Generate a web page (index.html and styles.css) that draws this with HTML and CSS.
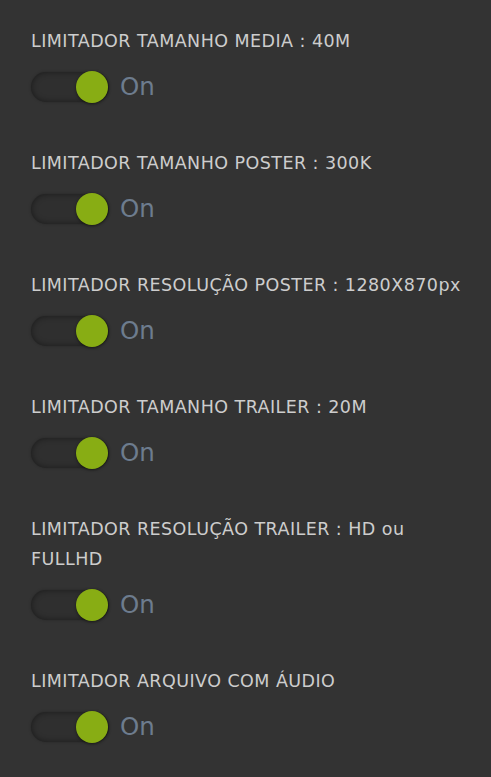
FILE: index.html
```html
<!DOCTYPE html>
<html lang="pt">
<head>
<meta charset="utf-8">
<link rel="stylesheet" href="styles.css">
</head>
<body>
<div class="panel">
  <div class="setting">
    <div class="label">LIMITADOR TAMANHO MEDIA : 40M</div>
    <div class="toggle-row"><span class="switch"><span class="knob"></span></span><span class="state">On</span></div>
  </div>
  <div class="setting">
    <div class="label">LIMITADOR TAMANHO POSTER : 300K</div>
    <div class="toggle-row"><span class="switch"><span class="knob"></span></span><span class="state">On</span></div>
  </div>
  <div class="setting">
    <div class="label">LIMITADOR RESOLUÇÃO POSTER : 1280X870px</div>
    <div class="toggle-row"><span class="switch"><span class="knob"></span></span><span class="state">On</span></div>
  </div>
  <div class="setting">
    <div class="label">LIMITADOR TAMANHO TRAILER : 20M</div>
    <div class="toggle-row"><span class="switch"><span class="knob"></span></span><span class="state">On</span></div>
  </div>
  <div class="setting">
    <div class="label">LIMITADOR RESOLUÇÃO TRAILER : HD ou FULLHD</div>
    <div class="toggle-row"><span class="switch"><span class="knob"></span></span><span class="state">On</span></div>
  </div>
  <div class="setting">
    <div class="label">LIMITADOR ARQUIVO COM ÁUDIO</div>
    <div class="toggle-row"><span class="switch"><span class="knob"></span></span><span class="state">On</span></div>
  </div>
</div>
</body>
</html>
```
FILE: styles.css
```css
html, body {
  margin: 0;
  padding: 0;
  background: #333333;
}
body {
  font-family: "DejaVu Sans", sans-serif;
  min-height: 777px;
}
.panel {
  padding: 26px 22px 0 31px;
  display: flex;
  flex-direction: column;
}
.setting {
  display: flex;
  flex-direction: column;
  margin-bottom: 45px;
}
.label {
  color: #cdcdcd;
  font-size: 17.5px;
  letter-spacing: 0.45px;
  line-height: 30px;
}
.toggle-row {
  margin-top: 15px;
  height: 32px;
  display: flex;
  align-items: center;
  gap: 11px;
}
.switch {
  position: relative;
  width: 78px;
  height: 30px;
  border-radius: 15px;
  background: #2f2f2f;
  box-shadow: inset 0 0 6px rgba(0,0,0,0.45), 0 0 3px rgba(0,0,0,0.25);
  display: flex;
  align-items: center;
  justify-content: flex-end;
}
.knob {
  width: 32px;
  height: 32px;
  margin-right: 1px;
  border-radius: 50%;
  background: #88ad14;
  box-shadow: 0 1px 3px rgba(0,0,0,0.5);
}
.state {
  color: #6d7c8e;
  font-size: 24.5px;
  line-height: 32px;
}
```
